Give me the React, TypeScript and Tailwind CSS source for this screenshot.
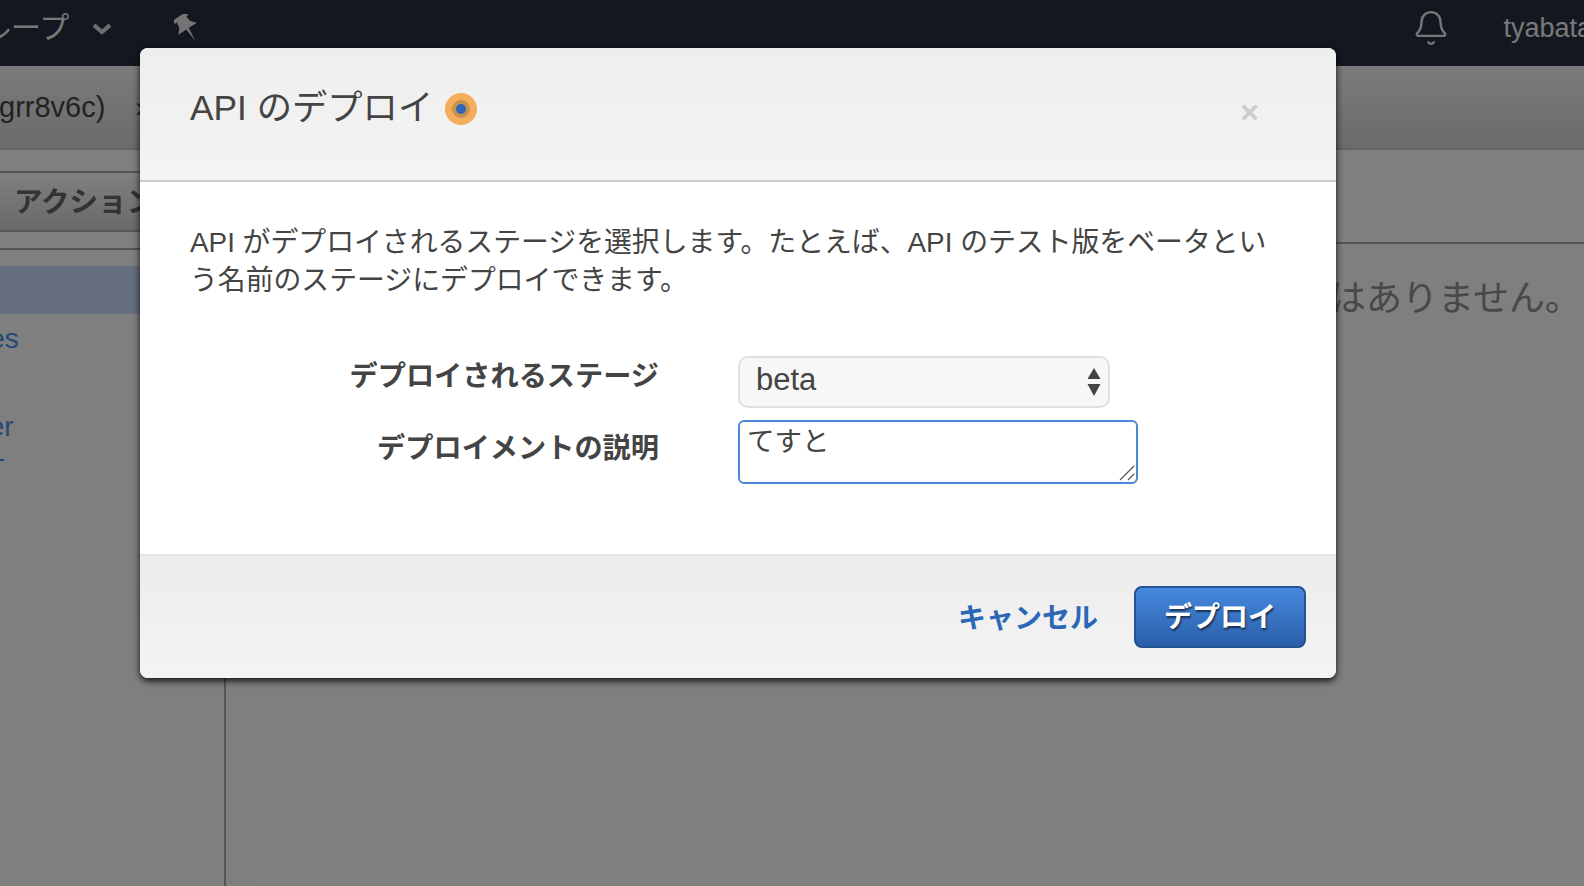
import { Bell } from "lucide-react";

const fontStack = "font-['Liberation_Sans','Noto_Sans_CJK_JP',sans-serif]";

function TopBar() {
  return (
    <div className="flex h-[66px] items-center bg-[#262f40] pb-[10px] text-[#f0f0f0]">
      <span className="-ml-[19px] text-[30px] leading-[50px]">ループ</span>
      <svg viewBox="0 0 18 12" className="ml-[24px] mt-[2px] h-[12px] w-[18px] text-[#d8d8d8]">
        <path d="M1 2 L9 9 L17 2" fill="none" stroke="currentColor" strokeWidth="4.2" />
      </svg>
      <svg viewBox="0 0 26 28" className="ml-[63px] h-[28px] w-[26px] text-[#e8e8e8]">
        <g transform="rotate(-33 13 14)">
          <path d="M5 0 H21 V4 H18.5 L19.5 10 L24 15 H2 L6.5 10 L7.5 4 H5 Z M11.5 15 H14.5 L13 29 Z" fill="currentColor" />
        </g>
      </svg>
      <Bell className="mb-[1px] ml-auto h-[38px] w-[38px] text-[#f0f0f0]" strokeWidth={1.5} />
      <span className="-mr-[8px] ml-[53px] whitespace-nowrap text-[27px]">tyabata</span>
    </div>
  );
}

function Sidebar() {
  return (
    <div className="flex w-[226px] shrink-0 flex-col border-r-2 border-[#aaaaaa] pt-[21px]">
      <div className="flex h-[61px] items-center overflow-hidden whitespace-nowrap border-y-2 border-[#aaaaaa] bg-gradient-to-b from-[#ffffff] to-[#d4d4d4] pb-[1px] pl-[14px] pt-[3px] text-[28.5px] font-bold text-[#666666]">
        アクション
      </div>
      <div className="mt-[16px] h-[2px] bg-[#aaaaaa]" />
      <div className="mt-[16px] h-[48px] bg-[#cddfff]" />
      <div className="-ml-[115px] mt-[7px] text-[28px] leading-[36px] text-[#4f92ec]">Resources</div>
      <div className="-ml-[114px] mt-[52px] text-[28px] leading-[36px] text-[#4f92ec]">Authorizer</div>
      <div className="mt-[14px] h-[2px] w-[4px] bg-[#4f92ec]" />
    </div>
  );
}

function DeployModal() {
  return (
    <div className="absolute left-[140px] top-[48px] flex h-[630px] w-[1196px] flex-col overflow-hidden rounded-[8px] bg-white text-[#444444] shadow-[0_3px_7px_rgba(0,0,0,0.85)]">
      <div className="flex h-[134px] shrink-0 items-start border-b-2 border-[#cccccc] bg-gradient-to-b from-[#eeeeee] to-[#f4f4f4] pl-[50px] pt-[34px]">
        <h2 className="text-[35.3px] font-normal leading-[52px]">API のデプロイ</h2>
        <svg viewBox="0 0 32 32" className="ml-[12px] mt-[11px] h-[32px] w-[32px]">
          <circle cx="16" cy="16" r="16" fill="#f4ae5b" />
          <circle cx="16" cy="16" r="9" fill="#c9914f" />
          <circle cx="16" cy="16" r="5" fill="#2b66ba" />
        </svg>
        <span className="ml-auto mr-[77px] mt-[7px] text-[32px] font-bold leading-[46px] text-[#cccccc]">×</span>
      </div>
      <div className="flex-1 px-[50px] pt-[42px]">
        <p className="text-[27.85px] leading-[38px]">
          API がデプロイされるステージを選択します。たとえば、API のテスト版をベータという名前のステージにデプロイできます。
        </p>
        <div className="mt-[56px] grid grid-cols-[469px_1fr] gap-x-[79px] gap-y-[12px]">
          <label className="pt-[1px] text-right text-[28.2px] font-bold leading-[38px]">デプロイされるステージ</label>
          <div className="relative h-[52px] w-[372px] rounded-[10px] border-2 border-[#e0e0e0] bg-[#f7f7f7] pl-[16px] text-[31px] leading-[44px]">
            beta
            <svg viewBox="0 0 14 28" className="absolute right-[7px] top-[10px] h-[28px] w-[14px]">
              <path d="M7 0 L13.5 11 H0.5 Z M0.5 16 H13.5 L7 28 Z" fill="#444444" />
            </svg>
          </div>
          <label className="pt-[9px] text-right text-[28.2px] font-bold leading-[38px]">デプロイメントの説明</label>
          <div className="relative h-[64px] w-[400px]">
            <textarea
              defaultValue="てすと"
              className="block h-full w-full resize-none rounded-[6px] border-2 border-[#4a88d8] px-[7px] pt-[3px] text-[27.5px] leading-[34px] outline-none"
            />
            <svg viewBox="0 0 16 16" className="pointer-events-none absolute bottom-[3px] right-[3px] h-[16px] w-[16px]">
              <path d="M1 15 L15 1 M9 15 L15 9" fill="none" stroke="#555555" strokeWidth="1.2" />
            </svg>
          </div>
        </div>
      </div>
      <div className="flex h-[124px] shrink-0 items-start border-t-2 border-[#e5e5e5] bg-gradient-to-b from-[#ececec] to-[#f4f4f4] pr-[30px] pt-[30px]">
        <a className="ml-auto mr-[36px] mt-[2px] text-[28px] font-bold leading-[62px] text-[#2a67b5]">キャンセル</a>
        <button className="h-[62px] w-[172px] rounded-[8px] border-2 border-[#235390] bg-gradient-to-b from-[#4689de] to-[#2a5fa9] pt-[2px] text-[28px] font-bold text-white [text-shadow:1px_2px_2px_rgba(0,0,0,0.6)]">
          デプロイ
        </button>
      </div>
    </div>
  );
}

export default function App() {
  return (
    <div className={`relative h-[886px] w-[1584px] overflow-hidden bg-white ${fontStack}`}>
      <TopBar />
      <div className="flex h-[84px] items-center border-b-2 border-[#c8c8c8] bg-gradient-to-b from-[#f6f6f6] to-[#d6d6d6] text-[29px] text-[#444444]">
        <span className="-ml-[1px] mt-[2px] whitespace-nowrap">grr8v6c)</span>
        <span className="ml-[30px] mt-[2px]">›</span>
      </div>
      <div className="flex h-[736px]">
        <Sidebar />
        <div className="flex-1">
          <div className="h-[94px] border-b-2 border-[#aaaaaa]" />
          <p className="mt-[32px] whitespace-nowrap pr-[3px] text-right text-[36px] leading-[46px] text-[#909090]">
            デプロイはありません。
          </p>
        </div>
      </div>
      <div className="absolute inset-0 bg-black/50" />
      <DeployModal />
    </div>
  );
}
